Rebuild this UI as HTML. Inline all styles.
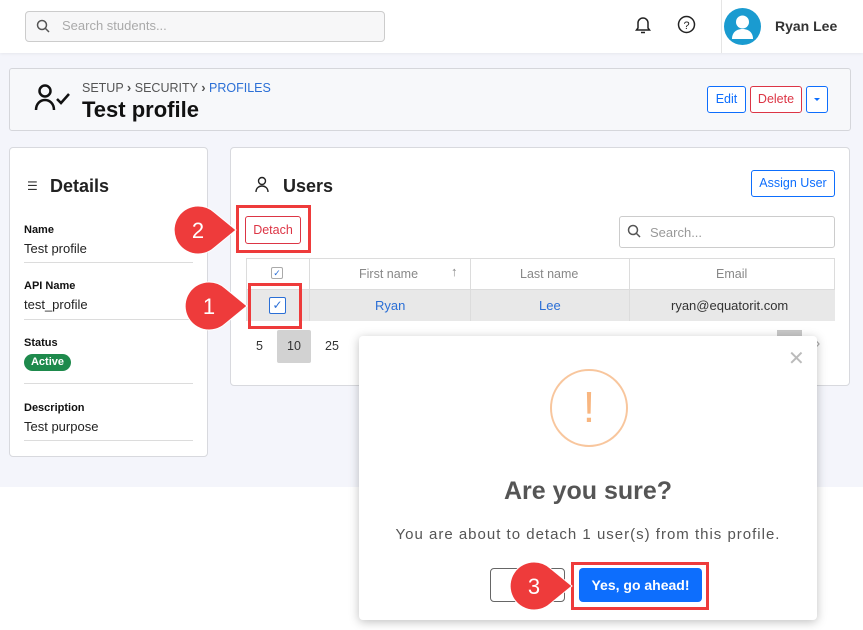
<!DOCTYPE html>
<html><head><meta charset="utf-8"><style>
*{box-sizing:border-box;margin:0;padding:0}
body{width:863px;height:630px;overflow:hidden;font-family:"Liberation Sans",sans-serif;background:#fff;position:relative;color:#212529}
.a{position:absolute}
.card{position:absolute;background:#fff;border:1px solid #d8d9de;border-radius:4px}
.lbl{font-size:11px;font-weight:bold;color:#111}
.val{font-size:13px;color:#222}
.hr{position:absolute;height:1px;background:#dcdcdc}
.redbox{position:absolute;border:3px solid #ee3b3b;}
</style></head><body>
<div class="a" style="left:0;top:53px;width:863px;height:434px;background:#f4f5fb"></div>
<!-- header -->
<div class="a" style="left:0;top:0;width:863px;height:53px;background:#fff;box-shadow:0 1px 3px rgba(0,0,0,.06)"></div>
<div class="a" style="left:25px;top:11px;width:360px;height:31px;border:1px solid #ccc;border-radius:4px;background:#f7f7f8"></div>
<svg class="a" style="left:36px;top:19px" width="14" height="14" viewBox="0 0 14 14"><circle cx="6" cy="6" r="4.5" fill="none" stroke="#555" stroke-width="1.5"/><path d="M9.5 9.5L13 13" stroke="#555" stroke-width="1.5"/></svg>
<div class="a" style="left:62px;top:18px;font-size:13px;color:#aaa">Search students...</div>
<svg class="a" style="left:634px;top:15px" width="18" height="20" viewBox="0 0 18 20"><path d="M4 13V8a5 5 0 0 1 10 0v5l1.5 2h-13z" fill="none" stroke="#222" stroke-width="1.5"/><path d="M7 17.5h4" stroke="#222" stroke-width="1.5"/></svg>
<svg class="a" style="left:677px;top:15px" width="19" height="19" viewBox="0 0 19 19"><circle cx="9.5" cy="9.5" r="8" fill="none" stroke="#222" stroke-width="1.5"/><text x="9.5" y="14" font-size="11" text-anchor="middle" font-family="Liberation Sans" fill="#222">?</text></svg>
<div class="a" style="left:721px;top:0;width:1px;height:53px;background:#e5e5e5"></div>
<svg class="a" style="left:724px;top:8px" width="37" height="37" viewBox="0 0 37 37"><circle cx="18.5" cy="18.5" r="18.5" fill="#1a9bd0"/><circle cx="18.5" cy="14" r="6.5" fill="#fff"/><path d="M8 31c0-7 5-10 10.5-10S29 24 29 31z" fill="#fff"/></svg>
<div class="a" style="left:775px;top:18px;font-size:14px;font-weight:bold;color:#333">Ryan Lee</div>
<!-- title bar -->
<div class="a" style="left:9px;top:68px;width:842px;height:63px;border:1px solid #d5d6db;border-radius:3px;background:#f7f8fa"></div>
<svg class="a" style="left:33px;top:82px" width="40" height="30" viewBox="0 0 40 30"><circle cx="12" cy="9" r="5.5" fill="none" stroke="#111" stroke-width="2.5"/><path d="M3 28c0-6 4-10 9-10s9 4 9 10" fill="none" stroke="#111" stroke-width="2.5"/><path d="M24 17l4 4 8-9" fill="none" stroke="#111" stroke-width="2.5"/></svg>
<div class="a" style="left:82px;top:80px;font-size:12.5px;color:#555">SETUP <b style="font-size:13px">›</b> SECURITY <b style="font-size:13px">›</b> <span style="color:#2b6fd6">PROFILES</span></div>
<div class="a" style="left:82px;top:97px;font-size:22px;font-weight:bold;color:#111">Test profile</div>
<div class="a" style="left:707px;top:86px;width:39px;height:27px;border:1px solid #0d6efd;border-radius:3px;color:#0d6efd;font-size:12.5px;text-align:center;line-height:25px;background:#fff">Edit</div>
<div class="a" style="left:750px;top:86px;width:52px;height:27px;border:1px solid #dc3545;border-radius:3px;color:#dc3545;font-size:12.5px;text-align:center;line-height:25px;background:#fff">Delete</div>
<div class="a" style="left:806px;top:86px;width:22px;height:27px;border:1px solid #0d6efd;border-radius:3px;background:#fff"><div class="a" style="left:7px;top:11px;border:3px solid transparent;border-top:3px solid #0d6efd"></div></div>
<!-- details -->
<div class="card" style="left:9px;top:147px;width:199px;height:310px"></div>
<div class="a" style="left:27px;top:179px;font-size:12px;color:#333">☰</div>
<div class="a" style="left:50px;top:176px;font-size:18px;font-weight:bold;color:#222">Details</div>
<div class="a lbl" style="left:24px;top:224px">Name</div><div class="a val" style="left:24px;top:241px">Test profile</div>
<div class="hr" style="left:24px;top:262px;width:169px"></div>
<div class="a lbl" style="left:24px;top:280px">API Name</div><div class="a val" style="left:24px;top:297px">test_profile</div>
<div class="hr" style="left:24px;top:319px;width:169px"></div>
<div class="a lbl" style="left:24px;top:337px">Status</div>
<div class="a" style="left:24px;top:354px;width:47px;height:17px;background:#1e8a4c;border-radius:9px;color:#fff;font-size:11px;font-weight:bold;text-align:center;line-height:17px">Active</div>
<div class="hr" style="left:24px;top:383px;width:169px"></div>
<div class="a lbl" style="left:24px;top:402px">Description</div><div class="a val" style="left:24px;top:419px">Test purpose</div>
<div class="hr" style="left:24px;top:440px;width:169px"></div>
<!-- users -->
<div class="card" style="left:230px;top:147px;width:620px;height:239px"></div>
<svg class="a" style="left:254px;top:176px" width="16" height="17" viewBox="0 0 16 17"><circle cx="8" cy="5" r="3.5" fill="none" stroke="#222" stroke-width="1.4"/><path d="M2 16c0-4 3-6 6-6s6 2 6 6" fill="none" stroke="#222" stroke-width="1.4"/></svg>
<div class="a" style="left:283px;top:176px;font-size:18px;font-weight:bold;color:#222">Users</div>
<div class="a" style="left:751px;top:170px;width:84px;height:27px;border:1px solid #0d6efd;border-radius:3px;color:#0d6efd;font-size:12.5px;text-align:center;line-height:25px;background:#fff">Assign User</div>
<div class="a" style="left:245px;top:216px;width:56px;height:28px;border:1px solid #dc3545;border-radius:3px;color:#dc3545;font-size:12.5px;text-align:center;line-height:26px;background:#fff">Detach</div>
<div class="a" style="left:619px;top:216px;width:216px;height:32px;border:1px solid #ccc;border-radius:3px;background:#fff"></div>
<svg class="a" style="left:627px;top:224px" width="14" height="14" viewBox="0 0 14 14"><circle cx="6" cy="6" r="4.5" fill="none" stroke="#555" stroke-width="1.5"/><path d="M9.5 9.5L13 13" stroke="#555" stroke-width="1.5"/></svg>
<div class="a" style="left:650px;top:225px;font-size:13px;color:#999">Search...</div>
<!-- table -->
<div class="a" style="left:246px;top:258px;width:589px;height:63px;border:1px solid #dcdcdc"></div>
<div class="a" style="left:247px;top:289px;width:588px;height:32px;background:#e8e8e8"></div>
<div class="hr" style="left:246px;top:289px;width:589px"></div>
<div class="a" style="left:309px;top:258px;width:1px;height:63px;background:#dcdcdc"></div>
<div class="a" style="left:470px;top:258px;width:1px;height:63px;background:#dcdcdc"></div>
<div class="a" style="left:629px;top:258px;width:1px;height:63px;background:#dcdcdc"></div>
<div class="a" style="left:271px;top:267px;width:12px;height:12px;border:1px solid #aaa;border-radius:2px;color:#2b6fd6;font-size:9px;line-height:10px;text-align:center">✓</div>
<div class="a" style="left:269px;top:297px;width:17px;height:17px;border:1px solid #2b6fd6;border-radius:2px;background:#fff;color:#2b6fd6;font-size:12px;line-height:15px;text-align:center">✓</div>
<div class="a" style="left:359px;top:267px;font-size:12.5px;color:#888">First name</div>
<div class="a" style="left:451px;top:264px;font-size:13px;color:#888">↑</div>
<div class="a" style="left:520px;top:267px;font-size:12.5px;color:#888">Last name</div>
<div class="a" style="left:716px;top:267px;font-size:12.5px;color:#888">Email</div>
<div class="a" style="left:375px;top:298px;font-size:13px;color:#2b6fd6">Ryan</div>
<div class="a" style="left:539px;top:298px;font-size:13px;color:#2b6fd6">Lee</div>
<div class="a" style="left:671px;top:298px;font-size:13px;color:#333">ryan@equatorit.com</div>
<div class="a" style="left:256px;top:339px;font-size:12.5px;color:#333">5</div>
<div class="a" style="left:277px;top:330px;width:34px;height:33px;background:#d2d2d2;border-radius:2px;font-size:12.5px;text-align:center;line-height:33px;color:#333">10</div>
<div class="a" style="left:325px;top:339px;font-size:12.5px;color:#333">25</div>
<div class="a" style="left:777px;top:330px;width:25px;height:8px;background:#c8c8c8"></div>
<div class="a" style="left:815px;top:335px;font-size:16px;color:#aaa">›</div>
<!-- modal -->
<div class="a" style="left:359px;top:336px;width:458px;height:284px;background:#fff;border-radius:4px;box-shadow:0 2px 10px rgba(0,0,0,.25)"></div>
<div class="a" style="left:788px;top:346px;font-size:20px;color:#bbb">✕</div>
<div class="a" style="left:550px;top:369px;width:78px;height:78px;border:2px solid #f8c69d;border-radius:50%;color:#f8b680;font-size:44px;text-align:center;line-height:74px">!</div>
<div class="a" style="left:359px;top:477px;width:458px;text-align:center;font-size:25px;font-weight:bold;color:#555">Are you sure?</div>
<div class="a" style="left:359px;top:526px;width:458px;text-align:center;font-size:15px;color:#555;letter-spacing:1px">You are about to detach 1 user(s) from this profile.</div>
<div class="a" style="left:490px;top:568px;width:75px;height:34px;border:1px solid #666;border-radius:4px;background:#fff"></div>
<div class="a" style="left:579px;top:568px;width:123px;height:34px;background:#0d6efd;border-radius:4px;color:#fff;font-size:14px;font-weight:bold;text-align:center;line-height:34px">Yes, go ahead!</div>
<!-- annotations -->
<div class="redbox" style="left:236px;top:205px;width:75px;height:48px"></div>
<div class="redbox" style="left:248px;top:283px;width:54px;height:46px"></div>
<div class="redbox" style="left:571px;top:562px;width:138px;height:48px"></div>
<svg class="a" style="left:170px;top:204px" width="70" height="52" viewBox="0 0 70 52"><path d="M28 2a24 24 0 1 0 16 42l22-18-22-18A24 24 0 0 0 28 2z" fill="#ee3b3b" stroke="#fff" stroke-width="1"/><text x="28" y="34" font-size="22" text-anchor="middle" fill="#fff" font-family="Liberation Sans">2</text></svg>
<svg class="a" style="left:181px;top:280px" width="70" height="52" viewBox="0 0 70 52"><path d="M28 2a24 24 0 1 0 16 42l22-18-22-18A24 24 0 0 0 28 2z" fill="#ee3b3b" stroke="#fff" stroke-width="1"/><text x="28" y="34" font-size="22" text-anchor="middle" fill="#fff" font-family="Liberation Sans">1</text></svg>
<svg class="a" style="left:506px;top:560px" width="70" height="52" viewBox="0 0 70 52"><path d="M28 2a24 24 0 1 0 16 42l22-18-22-18A24 24 0 0 0 28 2z" fill="#ee3b3b" stroke="#fff" stroke-width="1"/><text x="28" y="34" font-size="22" text-anchor="middle" fill="#fff" font-family="Liberation Sans">3</text></svg>
</body></html>
